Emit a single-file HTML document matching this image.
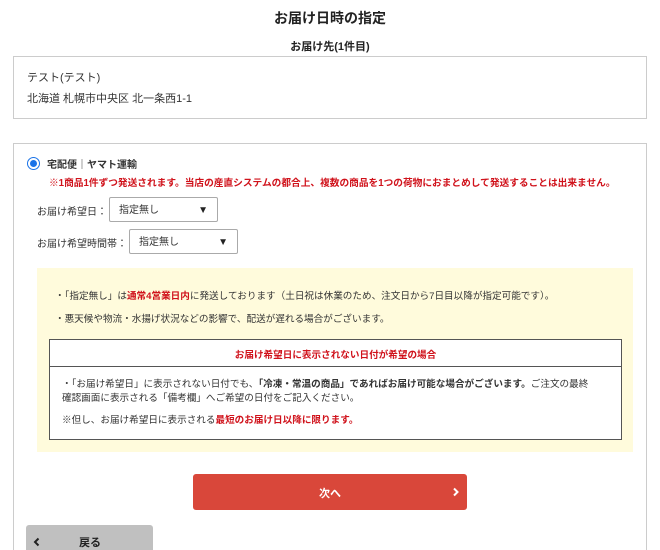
<!DOCTYPE html>
<html style="width:660px;height:550px;overflow:hidden"><head><meta charset="utf-8"><style>
*{margin:0;padding:0;box-sizing:border-box}
body{width:660px;height:550px;overflow:hidden;background:#fff;font-family:"Liberation Sans","Noto Sans CJK JP",sans-serif;color:#333;position:relative}
.a{position:absolute;white-space:nowrap}
.r{color:#d0121b;font-weight:bold}
.sel{position:absolute;border:1px solid #aaa;border-radius:2px;height:25px;font-size:10px;line-height:25px;padding-left:9px;background:#fff}
.sel i{position:absolute;right:9px;top:0;font-style:normal;font-size:10px;color:#222}
</style></head><body>
<div class="a" style="left:0;width:660px;text-align:center;top:8px;font-size:14px;font-weight:bold;color:#222">お届け日時の指定</div>
<div class="a" style="left:0;width:660px;text-align:center;top:38px;font-size:11px;font-weight:bold;color:#222">お届け先(1件目)</div>
<div class="a" style="left:13px;top:56px;width:634px;height:63px;border:1px solid #ccc"></div>
<div class="a" style="left:27px;top:69px;font-size:11px">テスト(テスト)</div>
<div class="a" style="left:27px;top:90px;font-size:11px">北海道 札幌市中央区 北一条西1-1</div>
<div class="a" style="left:13px;top:143px;width:634px;height:407px;border:1px solid #ccc;border-bottom:none"></div>
<div class="a" style="left:27px;top:157px;width:13px;height:13px;border-radius:50%;border:1px solid #1a73e8;background:#fff"><div style="position:absolute;left:2px;top:2px;width:7px;height:7px;border-radius:50%;background:#1a73e8"></div></div>
<div class="a" style="left:47px;top:156px;font-size:10px;font-weight:bold;color:#333">宅配便｜ヤマト運輸</div>
<div class="a r" style="left:49px;top:175px;font-size:9.7px">※1商品1件ずつ発送されます。当店の産直システムの都合上、複数の商品を1つの荷物におまとめして発送することは出来ません。</div>
<div class="a" style="left:37px;top:203px;font-size:10px">お届け希望日：</div>
<div class="sel" style="left:109px;top:197px;width:109px">指定無し<i>▼</i></div>
<div class="a" style="left:37px;top:235px;font-size:10px">お届け希望時間帯：</div>
<div class="sel" style="left:129px;top:229px;width:109px">指定無し<i>▼</i></div>
<div class="a" style="left:37px;top:268px;width:596px;height:184px;background:#fffbdc"></div>
<div class="a" style="left:55px;top:288px;font-size:9.6px">・「指定無し」は<span class="r">通常4営業日内</span>に発送しております（土日祝は休業のため、注文日から7日目以降が指定可能です）。</div>
<div class="a" style="left:55px;top:311px;font-size:9.6px">・悪天候や物流・水揚げ状況などの影響で、配送が遅れる場合がございます。</div>
<div class="a" style="left:49px;top:339px;width:573px;height:101px;border:1px solid #555;background:#fff"></div>
<div class="a" style="left:49px;top:366px;width:573px;border-top:1px solid #555"></div>
<div class="a r" style="left:49px;width:573px;text-align:center;top:347px;font-size:9.6px">お届け希望日に表示されない日付が希望の場合</div>
<div class="a" style="left:62px;top:376px;font-size:9.6px">・「お届け希望日」に表示されない日付でも、<b>「冷凍・常温の商品」であればお届け可能な場合がございます。</b>ご注文の最終</div>
<div class="a" style="left:62px;top:390px;font-size:9.6px">確認画面に表示される「備考欄」へご希望の日付をご記入ください。</div>
<div class="a" style="left:62px;top:412px;font-size:9.6px">※但し、お届け希望日に表示される<span class="r">最短のお届け日以降に限ります。</span></div>
<div class="a" style="left:193px;top:474px;width:274px;height:36px;background:#d9473a;border-radius:3px"></div>
<div class="a" style="left:193px;width:274px;text-align:center;top:485px;font-size:11px;font-weight:bold;color:#fff">次へ</div>
<svg class="a" style="left:452px;top:487px" width="8" height="10"><path d="M2 1.5L5.5 5L2 8.5" stroke="#fff" stroke-width="2" fill="none"/></svg>
<div class="a" style="left:26px;top:525px;width:127px;height:25px;background:#c0c0c0;border-radius:3px 3px 0 0"></div>
<svg class="a" style="left:33px;top:537px" width="8" height="10"><path d="M5.5 1.5L2 5L5.5 8.5" stroke="#222" stroke-width="2" fill="none"/></svg>
<div class="a" style="left:79px;top:534px;font-size:11px;font-weight:bold;color:#222">戻る</div>
</body></html>
